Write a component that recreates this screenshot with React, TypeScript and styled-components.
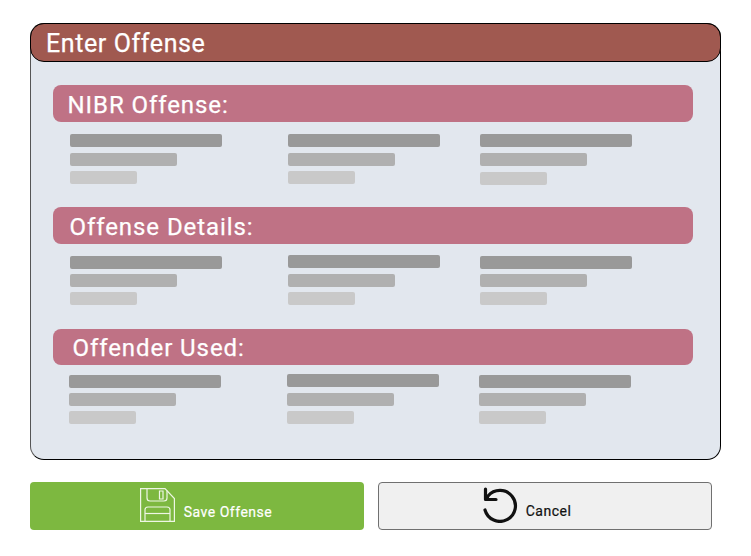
import React from "react";
import styled, { createGlobalStyle } from "styled-components";

const Global = createGlobalStyle`
  html, body { margin: 0; padding: 0; background: #fff; }
  body { font-family: Roboto, "Liberation Sans", sans-serif; width: 751px; height: 556px; overflow: hidden; }
`;

const Page = styled.div`
  width: 751px;
  height: 556px;
  box-sizing: border-box;
  padding: 23px 30px 0 30px;
`;

const Panel = styled.section`
  width: 691px;
  height: 437px;
  box-sizing: border-box;
  background: #e2e7ee;
  border: 1px solid #000;
  border-left: 1.5px solid #555;
  border-radius: 14px;
`;

const PanelHeader = styled.header`
  margin: -1px -1px 0 -1px;
  height: 39px;
  box-sizing: border-box;
  display: flex;
  align-items: center;
  padding: 1px 0 0 15px;
  background: #a05950;
  border: 1px solid #000;
  border-radius: 14px;
  color: #fff;
  font-size: 25px;
  font-weight: 400;
  -webkit-text-stroke: 0.25px #fff;
  letter-spacing: 0.6px;
`;

const Sections = styled.div`
  padding: 23px 27px 0 21.5px;
  display: flex;
  flex-direction: column;
`;

const Section = styled.div<{ $top?: number }>`
  margin-top: ${(p) => p.$top ?? 0}px;
`;

const SectionBar = styled.h2<{ $indent: number; $height: number }>`
  margin: 0;
  height: ${(p) => p.$height}px;
  width: 640px;
  box-sizing: border-box;
  display: flex;
  align-items: center;
  padding: 2px 0 0 ${(p) => p.$indent}px;
  background: #bf7285;
  border-radius: 8px;
  color: #fff;
  font-size: 24px;
  font-weight: 400;
  -webkit-text-stroke: 0.25px #fff;
  letter-spacing: 0.93px;
`;

const Columns = styled.div<{ $shift: number }>`
  display: grid;
  grid-template-columns: 218px 192px 152px;
  margin-left: ${(p) => p.$shift}px;
`;

const SkeletonColumn = styled.div<{ $top: number }>`
  padding-top: ${(p) => p.$top}px;
  display: flex;
  flex-direction: column;
`;

const tones = {
  long: { w: 152, h: 13, c: "#999999", gap: 6 },
  mid: { w: 107, h: 13, c: "#b0b0b0", gap: 5 },
  short: { w: 67, h: 13, c: "#c9c9c9", gap: 0 },
};

const SkeletonLine = styled.div<{ $tone: keyof typeof tones; $gap?: number }>`
  width: ${(p) => tones[p.$tone].w}px;
  height: ${(p) => tones[p.$tone].h}px;
  background: ${(p) => tones[p.$tone].c};
  border-radius: 2px;
  margin-bottom: ${(p) => p.$gap ?? tones[p.$tone].gap}px;
`;

const Actions = styled.div`
  display: flex;
  margin-top: 22px;
  gap: 14px;
`;

const ActionButton = styled.button<{ $variant: "save" | "cancel" }>`
  width: 334px;
  height: 48px;
  box-sizing: border-box;
  display: flex;
  align-items: flex-end;
  justify-content: center;
  padding: ${(p) => (p.$variant === "save" ? "0 0 9px 18px" : "0 36px 9px 0")};
  gap: ${(p) => (p.$variant === "save" ? 9 : 7)}px;
  border-radius: 4px;
  font-family: inherit;
  font-size: 14px;
  line-height: 17px;
  letter-spacing: 0.5px;
  border: ${(p) => (p.$variant === "save" ? "0" : "1px solid #707070")};
  background: ${(p) => (p.$variant === "save" ? "#7db840" : "#f0f0f0")};
  color: ${(p) => (p.$variant === "save" ? "#fff" : "#111")};
  font-weight: 400;
  -webkit-text-stroke: 0.2px currentColor;
`;

const IconSlot = styled.span<{ $w: number; $h: number; $lift: number }>`
  width: ${(p) => p.$w}px;
  height: ${(p) => p.$h}px;
  display: block;
  margin-bottom: ${(p) => p.$lift}px;
  svg { display: block; width: 100%; height: 100%; }
`;

const FloppyIcon = () => (
  <svg viewBox="0 0 35 34" fill="none" stroke="#eef6e4" strokeWidth="1.2">
    <path d="M0.6 0.6H25L34.4 10.5V33.4H0.6Z" />
    <path d="M7 0.6V10Q7 13 10 13H24Q27 13 27 10V2.5" />
    <path d="M19.5 3H23V11H19.5Z" />
    <path d="M5 33.4V22Q5 19 8 19H27Q30 19 30 22V33.4" />
    <path d="M5 25.5H30" />
  </svg>
);

const UndoIcon = () => (
  <svg viewBox="0 0 36 36" fill="none" stroke="#111" strokeWidth="3.2">
    <path d="M3.5 12L5 9A15.5 15.5 0 1 1 2 23" strokeLinecap="round" strokeLinejoin="round" />
    <path d="M2.5 2V12.5H13" strokeLinecap="round" strokeLinejoin="round" />
  </svg>
);

type Col = { top: number; gapA?: number; gapB?: number };
const rows: { id: string; title: string; indent: number; height: number; shift: number; cols: Col[] }[] = [
  {
    id: "nibr", title: "NIBR Offense:", indent: 15, height: 37, shift: 17,
    cols: [{ top: 12 }, { top: 12 }, { top: 12, gapB: 6 }],
  },
  {
    id: "details", title: "Offense Details:", indent: 17, height: 37, shift: 17,
    cols: [{ top: 12, gapA: 5 }, { top: 11, gapA: 6 }, { top: 12, gapA: 5 }],
  },
  {
    id: "used", title: "Offender Used:", indent: 20, height: 36, shift: 16,
    cols: [{ top: 10, gapA: 5 }, { top: 9, gapA: 6 }, { top: 10, gapA: 5 }],
  },
];

const tops = [0, 22, 24];

export default function App() {
  return (
    <Page>
      <Global />
      <Panel>
        <PanelHeader>Enter Offense</PanelHeader>
        <Sections>
          {rows.map((r, i) => (
            <Section key={r.id} $top={tops[i]}>
              <SectionBar $indent={r.indent} $height={r.height}>{r.title}</SectionBar>
              <Columns $shift={r.shift}>
                {r.cols.map((c, j) => (
                  <SkeletonColumn key={j} $top={c.top}>
                    <SkeletonLine $tone="long" $gap={c.gapA} />
                    <SkeletonLine $tone="mid" $gap={c.gapB} />
                    <SkeletonLine $tone="short" />
                  </SkeletonColumn>
                ))}
              </Columns>
            </Section>
          ))}
        </Sections>
      </Panel>
      <Actions>
        <ActionButton $variant="save">
          <IconSlot $w={35} $h={34} $lift={-1}><FloppyIcon /></IconSlot>
          Save Offense
        </ActionButton>
        <ActionButton $variant="cancel">
          <IconSlot $w={36} $h={36} $lift={-3}><UndoIcon /></IconSlot>
          Cancel
        </ActionButton>
      </Actions>
    </Page>
  );
}
